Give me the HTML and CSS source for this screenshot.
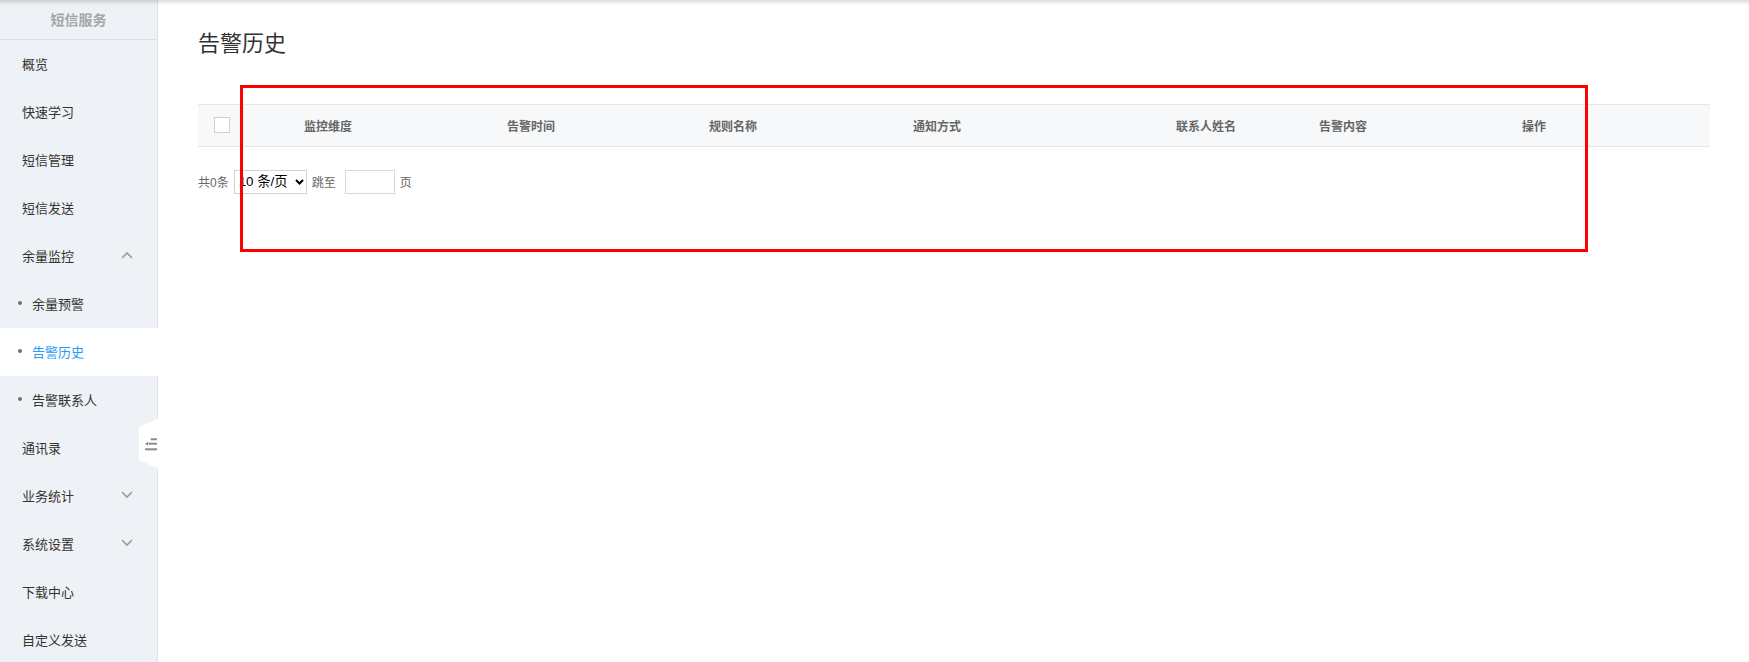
FILE: index.html
```html
<!DOCTYPE html>
<html lang="zh-CN">
<head>
<meta charset="utf-8">
<title>告警历史</title>
<link rel="stylesheet" href="styles.css">
</head>
<body>
<div class="app">
  <aside class="sidebar">
    <div class="side-title">短信服务</div>
    <ul class="menu">
      <li class="item">概览</li>
      <li class="item">快速学习</li>
      <li class="item">短信管理</li>
      <li class="item">短信发送</li>
      <li class="item has-sub">余量监控
        <svg class="chev" width="12" height="8" viewBox="0 0 12 8"><path d="M1 7 L6 2 L11 7" /></svg>
      </li>
      <li class="item sub"><span class="dot"></span>余量预警</li>
      <li class="item sub active"><span class="dot"></span>告警历史</li>
      <li class="item sub"><span class="dot"></span>告警联系人</li>
      <li class="item">通讯录</li>
      <li class="item has-sub">业务统计
        <svg class="chev" width="12" height="8" viewBox="0 0 12 8"><path d="M1 1 L6 6 L11 1" /></svg>
      </li>
      <li class="item has-sub">系统设置
        <svg class="chev" width="12" height="8" viewBox="0 0 12 8"><path d="M1 1 L6 6 L11 1" /></svg>
      </li>
      <li class="item">下载中心</li>
      <li class="item">自定义发送</li>
    </ul>
    <div class="collapse">
      <svg class="collapse-icon" width="12" height="13" viewBox="0 0 12 13">
        <rect x="5.7" y="0.3" width="6.3" height="2" />
        <rect x="4" y="4.7" width="8" height="2" />
        <polygon points="0,5.7 3.3,3.7 3.3,7.7" />
        <rect x="0" y="10.3" width="12" height="2" />
      </svg>
    </div>
  </aside>

  <main class="main">
    <h1 class="title">告警历史</h1>

    <div class="table">
      <div class="thead">
        <div class="cell cb"><span class="checkbox"></span></div>
        <div class="cell">监控维度</div>
        <div class="cell">告警时间</div>
        <div class="cell">规则名称</div>
        <div class="cell">通知方式</div>
        <div class="cell"></div>
        <div class="cell">联系人姓名</div>
        <div class="cell">告警内容</div>
        <div class="cell">操作</div>
        <div class="cell"></div>
      </div>
    </div>

    <div class="pager">
      <span class="total">共0条</span>
      <span class="select-wrap">
        <select class="size-select">
          <option>10 条/页</option>
          <option>20 条/页</option>
          <option>50 条/页</option>
        </select>
        <svg class="select-arrow" width="9" height="6" viewBox="0 0 9 6"><path d="M1 1 L4.5 4.5 L8 1" /></svg>
      </span>
      <span class="jump">跳至</span>
      <input class="page-input" type="text">
      <span class="page-unit">页</span>
    </div>

    <div class="annot"></div>
  </main>
</div>
<div class="topshadow"></div>
</body>
</html>
```

FILE: styles.css
```css
* {
  box-sizing: border-box;
}

html, body {
  margin: 0;
  padding: 0;
  height: 100%;
  background: #ffffff;
  font-family: "Liberation Sans", "Noto Sans CJK SC", sans-serif;
  color: #333333;
}

.app {
  display: flex;
  height: 100vh;
  overflow: hidden;
}

/* ---------- sidebar ---------- */
.sidebar {
  position: relative;
  width: 158px;
  flex: 0 0 158px;
  background: #eef1f5;
  border-right: 1px solid #dfe3e8;
}

.side-title {
  height: 40px;
  border-bottom: 1px solid #dce0e6;
  display: flex;
  align-items: center;
  justify-content: center;
  font-size: 14px;
  font-weight: bold;
  color: #a4a6a8;
  padding-bottom: 2px;
}

.menu {
  list-style: none;
  margin: 0;
  padding: 0;
}

.item {
  height: 48px;
  display: flex;
  align-items: center;
  justify-content: space-between;
  padding: 0 24px 2px 22px;
  font-size: 13px;
  color: #333333;
}

.item.sub {
  justify-content: flex-start;
  padding-left: 18px;
}

.dot {
  width: 4px;
  height: 4px;
  border-radius: 50%;
  background: #6d6f72;
  margin-right: 10px;
}

.item.active {
  background: #ffffff;
  color: #2a9af5;
  margin-right: -1px;
}

.chev {
  fill: none;
  stroke: #9a9c9f;
  stroke-width: 1.6;
}

.collapse {
  position: absolute;
  left: 139px;
  top: 418px;
  width: 20px;
  height: 51px;
  background: #ffffff;
  clip-path: polygon(0 9px, 100% 0, 100% 100%, 0 42px);
}

.collapse-icon {
  position: absolute;
  left: 6px;
  top: 20px;
  fill: #8a8a8a;
}

/* ---------- main ---------- */
.main {
  position: relative;
  flex: 1;
  padding: 29px 39px 0 40px;
}

.title {
  margin: 0;
  font-size: 22px;
  line-height: 30px;
  font-weight: normal;
  color: #333333;
}

.table {
  margin-top: 45px;
}

.thead {
  display: grid;
  grid-template-columns: 48px 164px 242px 162px 246px 40px 212px 62px 320px 16px;
  height: 43px;
  background: #f7f8fa;
  border-top: 1px solid #e4e5e7;
  border-bottom: 1px solid #e4e5e7;
}

.cell {
  display: flex;
  align-items: center;
  justify-content: center;
  font-size: 12px;
  font-weight: bold;
  color: #666666;
}

.checkbox {
  width: 16px;
  height: 16px;
  border: 1px solid #cfcfcf;
  background: #ffffff;
  margin-top: -1px;
}

.pager {
  display: flex;
  align-items: center;
  margin-top: 22px;
  height: 25px;
  font-size: 12px;
  color: #666666;
}

.select-wrap {
  position: relative;
  margin-left: 5px;
  display: inline-flex;
}

.size-select {
  appearance: none;
  -webkit-appearance: none;
  width: 73px;
  height: 24px;
  padding: 0 0 0 4px;
  border: 1px solid #d4d4d4;
  border-radius: 0;
  background: #ffffff;
  font-family: "Liberation Sans", "Noto Sans CJK SC", sans-serif;
  font-size: 13.33px;
  color: #000000;
}

.select-arrow {
  position: absolute;
  left: 61px;
  top: 9px;
  fill: none;
  stroke: #000000;
  stroke-width: 2;
  pointer-events: none;
}

.jump {
  margin-left: 5px;
}

.page-input {
  width: 50px;
  height: 24px;
  margin-left: 9px;
  border: 1px solid #d9d9d9;
  border-radius: 0;
  padding: 0 4px;
  font-size: 12px;
}

.page-unit {
  margin-left: 5px;
}

/* red annotation box drawn over the content */
.annot {
  position: absolute;
  left: 82px;
  top: 85px;
  width: 1348px;
  height: 167px;
  border: 3px solid #ff0000;
  pointer-events: none;
}

.topshadow {
  position: fixed;
  left: 0;
  top: 0;
  right: 0;
  height: 5px;
  background: linear-gradient(to bottom, rgba(0, 0, 0, 0.14), rgba(0, 0, 0, 0));
  pointer-events: none;
}
```
